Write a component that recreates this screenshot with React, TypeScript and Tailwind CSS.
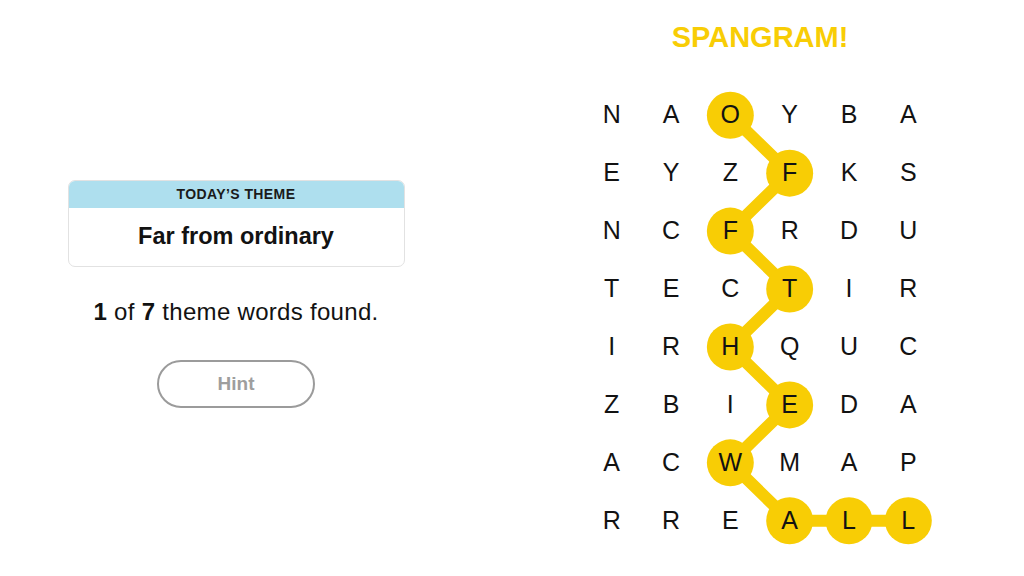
import React from "react";

const GRID = [
  "NAOYBA",
  "EYZFKS",
  "NCFRDU",
  "TECTIR",
  "IRHQUC",
  "ZBIEDA",
  "ACWMAP",
  "RREALL",
];

const PATH: [number, number][] = [
  [2, 0],
  [3, 1],
  [2, 2],
  [3, 3],
  [2, 4],
  [3, 5],
  [2, 6],
  [3, 7],
  [4, 7],
  [5, 7],
];

const CW = 59.4;
const RH = 58;

export default function App() {
  const pts = PATH.map(([c, r]) => `${CW / 2 + c * CW},${RH / 2 + r * RH}`).join(" ");
  return (
    <div
      className="w-[1024px] h-[576px] bg-white flex text-[#121212]"
      style={{ fontFamily: '"Liberation Sans", Arial, sans-serif' }}
    >
      <div className="w-[471px] flex flex-col items-center pt-[180px] pl-[1px]">
        <div className="w-[337px] h-[87px] rounded-[7px] border border-[#e2e2e2] overflow-hidden flex flex-col">
          <div className="h-[27px] bg-[#aedfee] flex items-center justify-center text-[14px] font-bold tracking-[0.4px] text-[#1a1a1a]">
            TODAY’S THEME
          </div>
          <div className="flex-1 flex items-center justify-center text-[23.5px] font-bold pb-[1px]">
            Far from ordinary
          </div>
        </div>
        <div className="mt-[30px] text-[24px] leading-[30px] tracking-[0.3px]">
          <span className="font-bold">1</span> of <span className="font-bold">7</span> theme words found.
        </div>
        <div className="mt-[33px] w-[158px] h-[48px] rounded-full border-2 border-[#9b9b9b] flex items-center justify-center text-[19px] font-bold text-[#9e9e9e]">
          Hint
        </div>
      </div>
      <div className="flex-1 flex flex-col pl-[111px]">
        <div className="w-[356px] h-[86px] flex justify-center pt-[19px] text-[29px] leading-[36px] font-bold text-[#f8cd05]">
          SPANGRAM!
        </div>
        <div className="relative w-[356px]">
          <svg className="absolute inset-0" width={356} height={464} viewBox="0 0 356.4 464">
            <polyline
              points={pts}
              fill="none"
              stroke="#f8cd05"
              strokeWidth={12}
              strokeLinejoin="round"
              strokeLinecap="round"
            />
            {PATH.map(([c, r]) => (
              <circle key={`${c}-${r}`} cx={CW / 2 + c * CW} cy={RH / 2 + r * RH} r={23.5} fill="#f8cd05" />
            ))}
          </svg>
          <div className="relative grid grid-cols-6">
            {GRID.map((row, r) =>
              row.split("").map((ch, c) => (
                <div key={`${r}-${c}`} className="h-[58px] flex items-center justify-center text-[25px]">
                  {ch}
                </div>
              ))
            )}
          </div>
        </div>
      </div>
    </div>
  );
}
